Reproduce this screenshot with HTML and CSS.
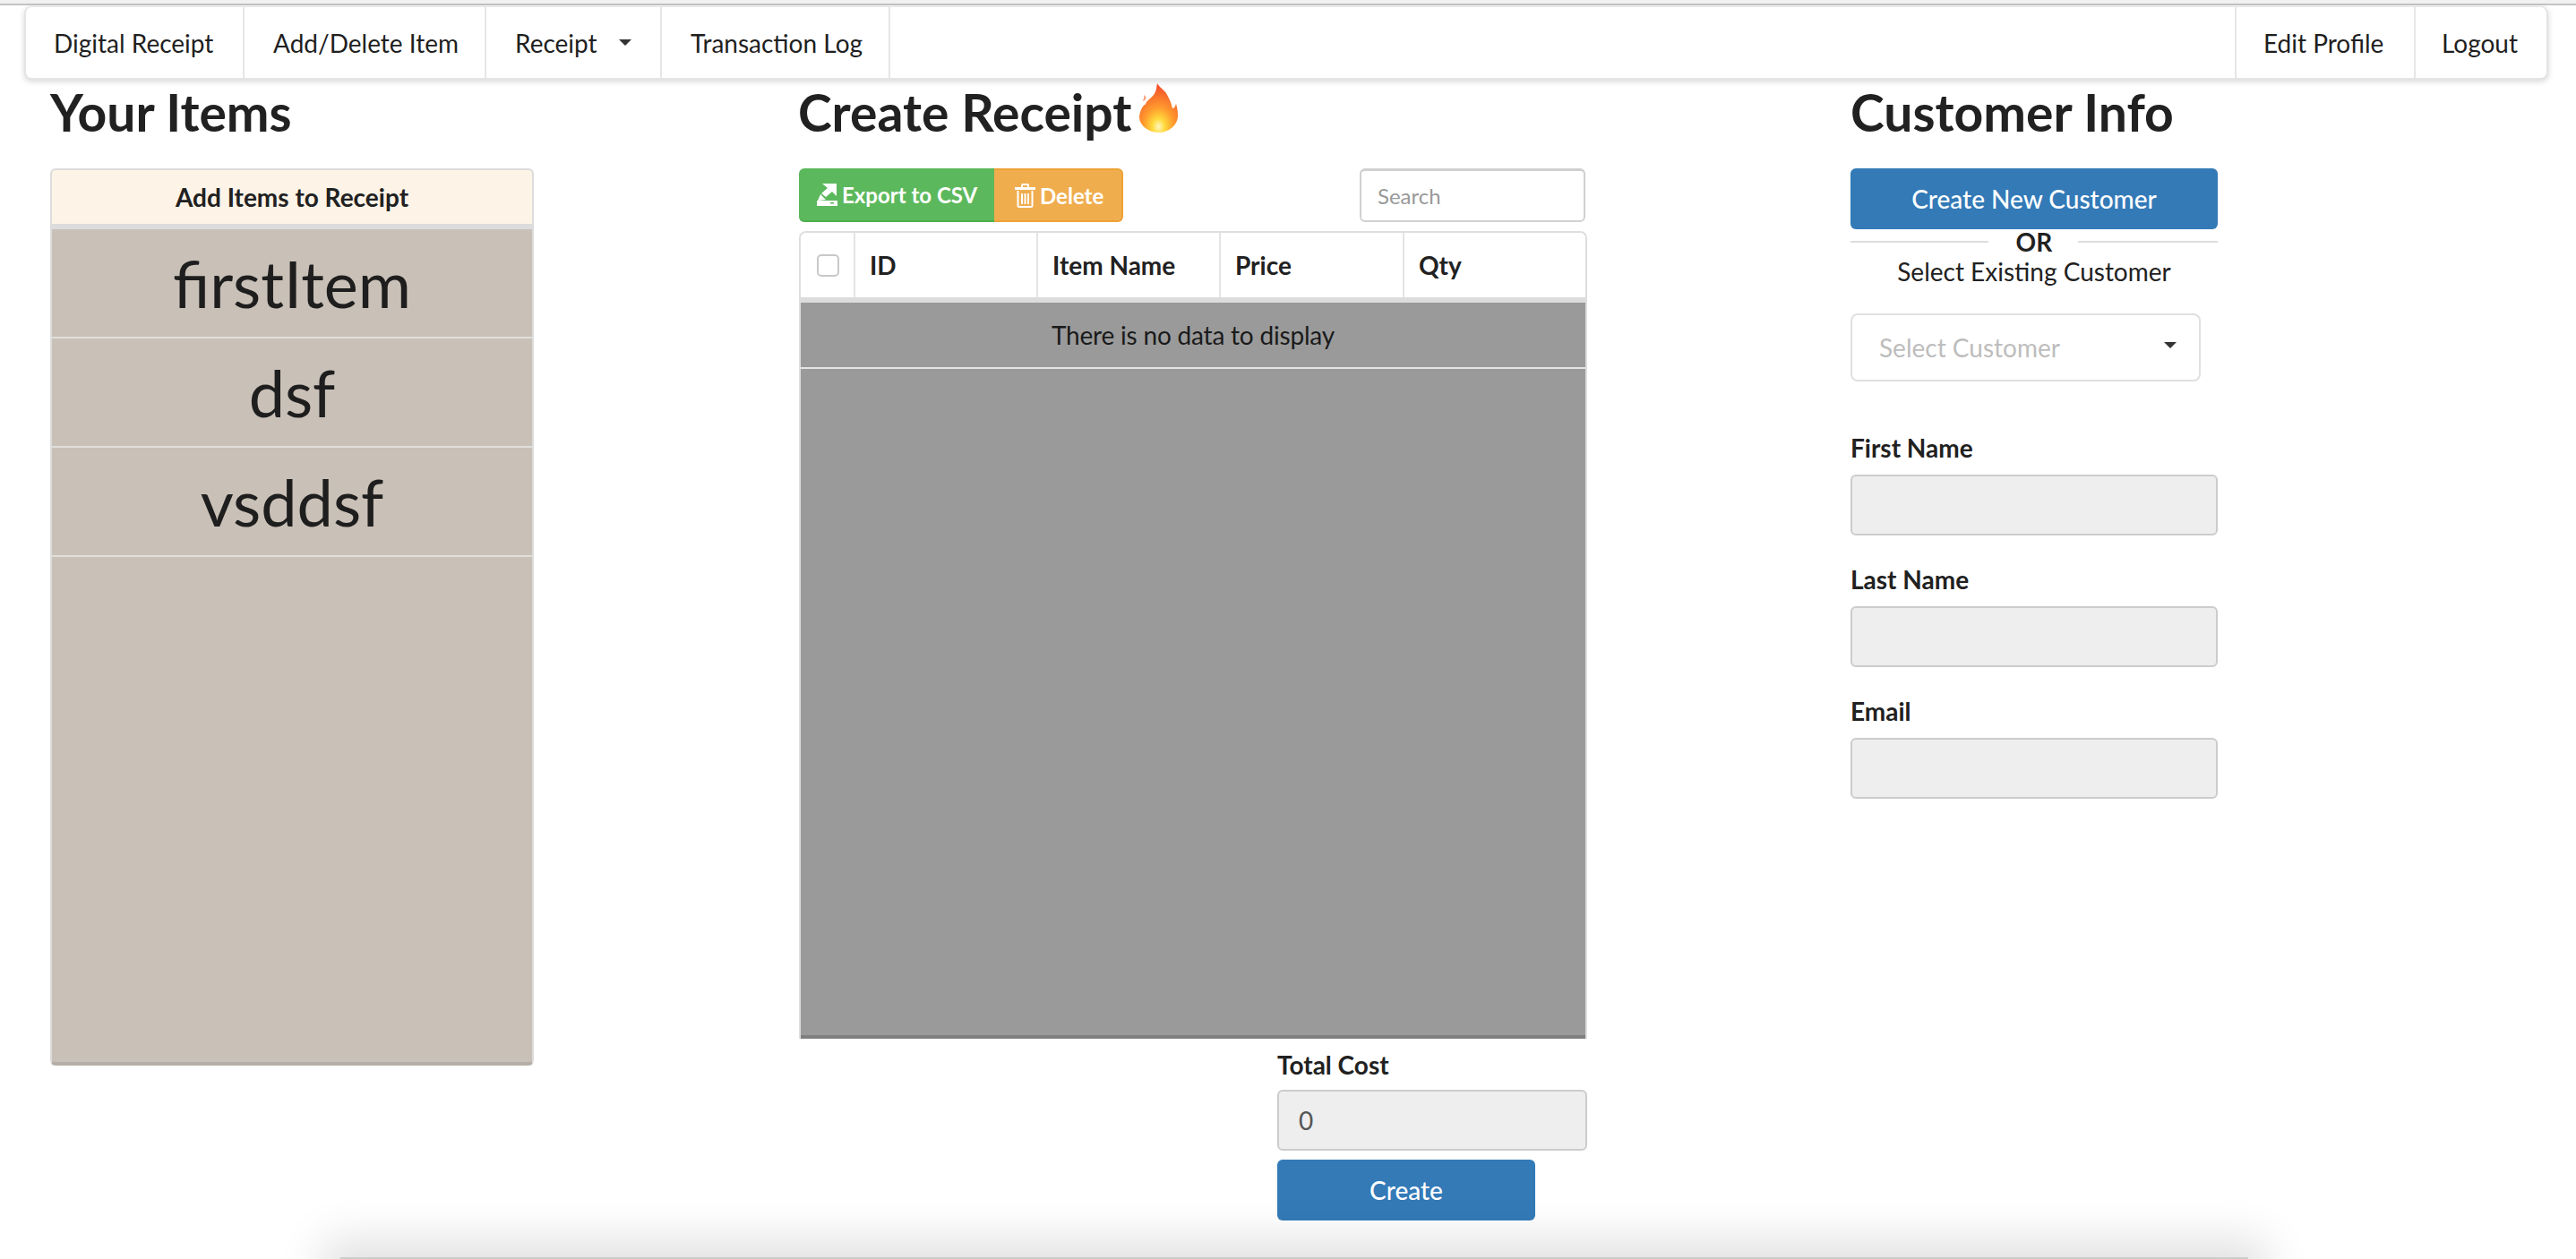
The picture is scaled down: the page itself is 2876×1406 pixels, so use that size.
FILE: index.html
```html
<!DOCTYPE html>
<html lang="en">
<head>
<meta charset="utf-8">
<title>Digital Receipt</title>
<link rel="stylesheet" href="styles.css">
</head>
<body>
<div class="chrome-strip"></div>
<nav class="navbar">
  <a class="nav-item nav-brand">Digital Receipt</a>
  <a class="nav-item nav-add">Add/Delete Item</a>
  <a class="nav-item nav-dropdown">Receipt<span class="caret caret-nav"></span></a>
  <a class="nav-item nav-log">Transaction Log</a>
  <div class="nav-right">
    <a class="nav-item nav-edit">Edit Profile</a>
    <a class="nav-item nav-logout">Logout</a>
  </div>
</nav>
<main class="page">
  <section class="col-items">
    <h1 class="title">Your Items</h1>
    <div class="items-panel">
      <div class="items-head">Add Items to Receipt</div>
      <div class="item-row">firstItem</div>
      <div class="item-row">dsf</div>
      <div class="item-row">vsddsf</div>
    </div>
  </section>
  <section class="col-receipt">
    <h1 class="title title-fire">Create Receipt<svg class="fire" viewBox="0 0 43 55" aria-hidden="true">
      <defs>
        <radialGradient id="fireGrad" cx="0.5" cy="0.88" r="0.82">
          <stop offset="0" stop-color="#fff7c0"/>
          <stop offset="0.2" stop-color="#ffd93b"/>
          <stop offset="0.48" stop-color="#ff9a2e"/>
          <stop offset="1" stop-color="#f4502a"/>
        </radialGradient>
      </defs>
      <path fill="#f9a07a" d="M5 13c.5 3 0 5-1.500 7 2.500-.5 4-2 4-3.500 0-1.500-1.200-2.800-2.500-3.500z"/>
      <path fill="url(#fireGrad)" d="M20 0c-1 5-1 9-4 13-2 3-6 5-8 8-1 2-1 3-2 3-2 1-5 6-6 13-.5 9 9 18 21 18s22-8 22-19c0-5-1-10-2-13-1 3-2 5-4 5-1-5-3-10-7-17-3-4-8-7-10-11z"/>
    </svg></h1>
    <div class="table-tools">
      <div class="btn-group">
        <button class="tool-btn tool-export" type="button">
          <svg class="tool-icon" viewBox="0 0 23 25" aria-hidden="true"><path fill="#fff" d="M6 0h16v14l-5-5-7 6-5-4 7-6zM4 12l6 6-9 1zM0 19h23v6H0z"/><rect x="15" y="21" width="4" height="1.500" fill="#5cb85c"/></svg>Export to CSV
        </button>
        <button class="tool-btn tool-delete" type="button">
          <svg class="tool-icon tool-icon-trash" viewBox="0 0 23 27" aria-hidden="true"><path fill="none" stroke="#fff" stroke-width="2" d="M3.500 8v16.500a1.500 1.500 0 0 0 1.500 1.500h13a1.500 1.500 0 0 0 1.500-1.500V8M8 11v12M11.500 11v12M15 11v12"/><path fill="#fff" fill-rule="evenodd" d="M0 4h7V1.500L8 0h7l1 1.500V4h7v3H0zM9 4h5V2H9z"/></svg>Delete
        </button>
      </div>
      <input class="search" type="text" placeholder="Search">
    </div>
    <div class="data-table">
      <div class="table-head">
        <div class="th th-check"><span class="checkbox"></span></div>
        <div class="th">ID</div>
        <div class="th">Item Name</div>
        <div class="th">Price</div>
        <div class="th th-last">Qty</div>
      </div>
      <div class="table-body">
        <div class="no-data">There is no data to display</div>
      </div>
    </div>
    <div class="total-block">
      <label class="field-label total-label">Total Cost</label>
      <input class="readonly-input total-input" type="text" value="0" readonly>
      <button class="primary-btn create-btn" type="button">Create</button>
    </div>
  </section>
  <section class="col-customer">
    <h1 class="title">Customer Info</h1>
    <button class="primary-btn" type="button">Create New Customer</button>
    <div class="or-divider"><span>OR</span></div>
    <div class="select-caption">Select Existing Customer</div>
    <div class="select-box"><span>Select Customer</span><span class="caret caret-select"></span></div>
    <div class="fields">
      <label class="field-label">First Name</label>
      <input class="readonly-input" type="text" readonly>
      <label class="field-label">Last Name</label>
      <input class="readonly-input" type="text" readonly>
      <label class="field-label">Email</label>
      <input class="readonly-input" type="text" readonly>
    </div>
  </section>
</main>
<div class="window-shadow"></div>
</body>
</html>
```

FILE: styles.css
```css
* { box-sizing: border-box; }
html, body { height: 100%; }
body {
  margin: 0;
  overflow: hidden;
  background: #fff;
  color: #212121;
  font-family: Lato, "Liberation Sans", sans-serif;
  font-size: 28px;
  position: relative;
}
.chrome-strip {
  height: 6px;
  background: #f1f1f1;
  border-bottom: 2px solid #c4c4c4;
}
.navbar {
  display: flex;
  height: 82px;
  margin: 1px 31px 0 27px;
  background: #fff;
  border: 2px solid #e4e4e4;
  border-top-width: 1px;
  border-radius: 8px;
  box-shadow: 0 2px 6px rgba(34, 36, 38, 0.18);
}
.nav-item {
  display: flex;
  align-items: center;
  border-right: 2px solid #e6e6e6;
  font-size: 28px;
  color: #1f1f1f;
  white-space: nowrap;
}
.nav-brand { width: 244px; padding-left: 31px; }
.nav-add { width: 270px; padding-left: 32px; }
.nav-dropdown { width: 196px; padding-left: 32px; gap: 24px; }
.nav-log { width: 255px; padding-left: 32px; }
.nav-right { display: flex; margin-left: auto; }
.nav-edit { width: 202px; padding-left: 30px; border-left: 2px solid #e6e6e6; }
.nav-logout { width: 146px; padding-left: 29px; border-right: 0; }
.caret {
  display: block;
  width: 0;
  height: 0;
  border-left: 7px solid transparent;
  border-right: 7px solid transparent;
  border-top: 7px solid #333;
}
.page {
  display: grid;
  grid-template-columns: 836px 1174px 410px;
  padding-left: 56px;
}
.title {
  margin: 0 0 27px;
  height: 72px;
  font-size: 57px;
  line-height: 72px;
  font-weight: 700;
  color: #212121;
  white-space: nowrap;
}
.title-fire { position: relative; margin-left: -1px; }
.fire {
  position: absolute;
  left: 381px;
  top: 4px;
  width: 43px;
  height: 55px;
}
.items-panel {
  width: 540px;
  height: 1002px;
  background: #c9c0b7;
  border: 2px solid #dcdcdc;
  border-bottom: 4px solid #b4aea7;
  border-radius: 6px;
  overflow: hidden;
}
.items-head {
  height: 66px;
  display: flex;
  align-items: center;
  justify-content: center;
  background: #fdf3e7;
  border-bottom: 6px solid #dcdcdc;
  font-weight: 700;
}
.item-row {
  height: 122px;
  display: flex;
  align-items: center;
  justify-content: center;
  border-bottom: 2px solid #e2dfdb;
  font-size: 72px;
  color: #1e1e1e;
}
.table-tools {
  display: flex;
  justify-content: space-between;
  height: 60px;
  width: 878px;
  margin-bottom: 10px;
}
.btn-group { display: flex; }
.tool-btn {
  display: flex;
  align-items: center;
  height: 60px;
  padding: 0 0 0 20px;
  border: 0;
  color: #fff;
  font-family: inherit;
  font-size: 24px;
  font-weight: 700;
  gap: 5px;
  white-space: nowrap;
}
.tool-export {
  width: 218px;
  background: #5cb85c;
  border-bottom: 2px solid #4cae4c;
  border-radius: 6px 0 0 6px;
}
.tool-delete {
  width: 144px;
  padding-left: 23px;
  background: #f0ad4e;
  border: 2px solid #eea236;
  border-left: 0;
  border-radius: 0 6px 6px 0;
}
.tool-icon { width: 23px; height: 25px; flex: none; }
.tool-icon-trash { height: 27px; }
.search {
  width: 252px;
  height: 60px;
  padding: 0 18px;
  background: #fff;
  border: 2px solid #d0d0d0;
  border-top-width: 3px;
  border-radius: 6px;
  font-family: inherit;
  font-size: 24px;
  color: #333;
}
.search::placeholder { color: #999; opacity: 1; }
.data-table {
  width: 880px;
  height: 902px;
  border: 2px solid #dedede;
  border-bottom: 0;
  border-radius: 8px 8px 0 0;
  overflow: hidden;
  display: flex;
  flex-direction: column;
}
.table-head {
  display: grid;
  grid-template-columns: 61px 204px 204px 205px 1fr;
  height: 78px;
  flex: none;
  background: #fff;
  border-bottom: 6px solid #dcdcdc;
}
.th {
  display: flex;
  align-items: center;
  padding-left: 16px;
  border-right: 2px solid #e4e4e4;
  font-weight: 700;
}
.th-last { border-right: 0; }
.th-check { padding-left: 18px; }
.checkbox {
  width: 25px;
  height: 25px;
  background: #fff;
  border: 2px solid #c8c8c8;
  border-radius: 5px;
}
.table-body {
  flex: 1;
  background: #9a9a9a;
  border-bottom: 4px solid #7f7f7f;
}
.no-data {
  height: 74px;
  display: flex;
  align-items: center;
  justify-content: center;
  border-bottom: 2px solid #e4e4e4;
  color: #1a1a1a;
  letter-spacing: -0.2px;
}
.total-block {
  margin-left: 534px;
  width: 346px;
  padding-top: 13px;
}
.field-label {
  display: block;
  height: 44px;
  font-size: 28px;
  line-height: 32px;
  font-weight: 700;
  color: #212121;
}
.readonly-input {
  display: block;
  width: 100%;
  height: 68px;
  padding: 0 22px;
  background: #eee;
  border: 2px solid #ccc;
  border-radius: 6px;
  font-family: inherit;
  font-size: 28px;
  color: #555;
}
.total-input { margin-bottom: 10px; }
.primary-btn {
  display: block;
  width: 100%;
  height: 68px;
  background: #337ab7;
  border: 0;
  border-radius: 6px;
  color: #fff;
  font-family: inherit;
  font-size: 28px;
  font-weight: 500;
}
.create-btn { width: 288px; }
.or-divider {
  display: flex;
  align-items: center;
  justify-content: center;
  height: 26px;
  margin-top: 1px;
  background: linear-gradient(#dedede, #dedede) left center / 154px 2px no-repeat,
    linear-gradient(#dedede, #dedede) right center / 156px 2px no-repeat;
  font-weight: 700;
  letter-spacing: 0.3px;
  line-height: 26px;
}
.select-caption {
  height: 43px;
  line-height: 40px;
  text-align: center;
}
.select-box {
  display: flex;
  align-items: center;
  justify-content: space-between;
  width: 391px;
  height: 76px;
  margin-top: 24px;
  padding: 0 30px;
  background: #fff;
  border: 2px solid #e0e0e0;
  border-radius: 8px;
  color: #bdbdbd;
}
.caret-select { margin: -6px -5px 0 0; }
.fields { padding-top: 58px; }
.fields .field-label { height: 46px; }
.fields .readonly-input { margin-bottom: 33px; }
.window-shadow {
  position: absolute;
  left: 380px;
  right: 366px;
  top: 1404px;
  height: 40px;
  background: #ccc;
  box-shadow: 0 0 50px 20px rgba(0, 0, 0, 0.12);
}
```
